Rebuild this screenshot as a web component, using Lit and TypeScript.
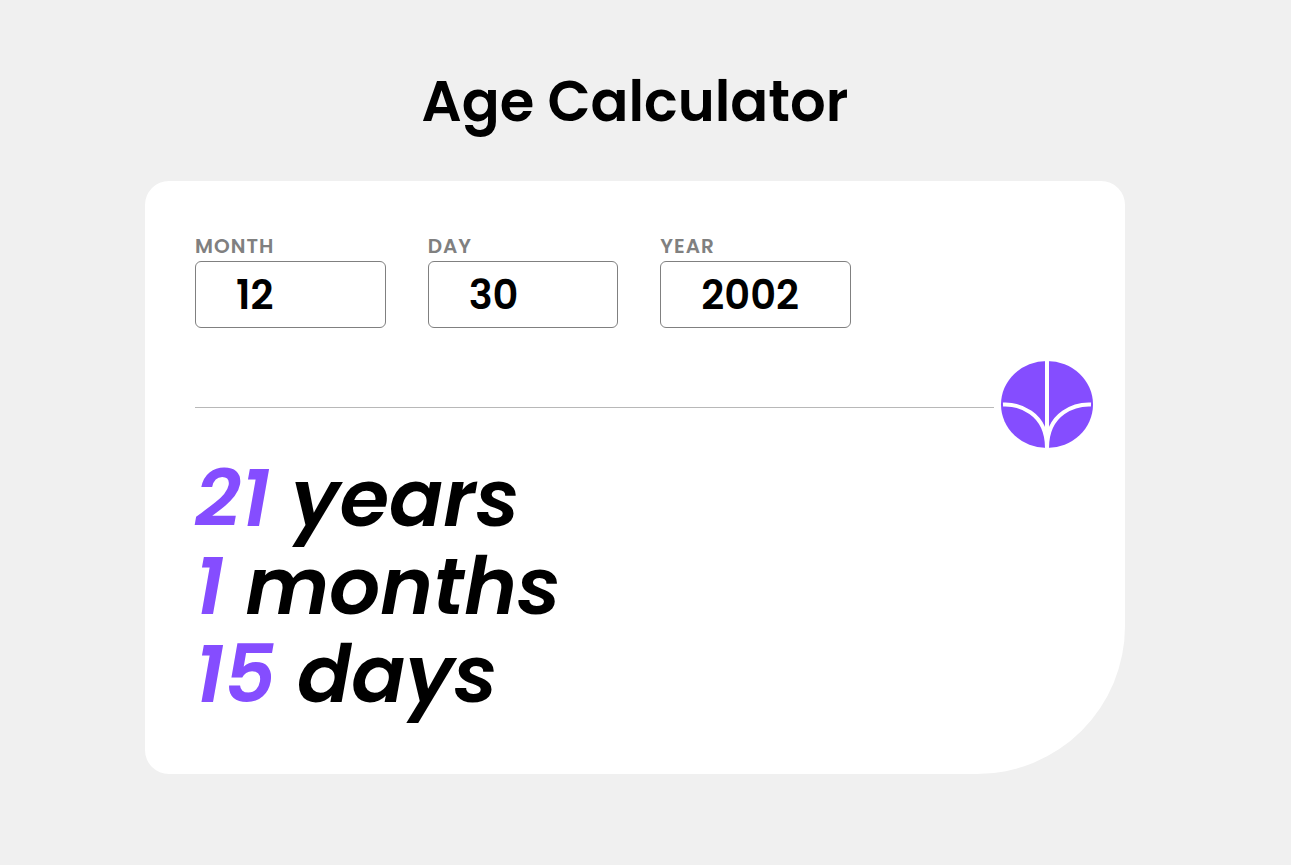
import { LitElement, html, css } from "lit";
import { customElement, state } from "lit/decorators.js";

interface Field {
  id: string;
  label: string;
  value: string;
}

interface Result {
  amount: number;
  unit: string;
}

@customElement("app-root")
export class AppRoot extends LitElement {
  static styles = css`
    :host {
      display: block;
      box-sizing: border-box;
      min-height: 100vh;
      padding: 60px 21px 60px 0;
      background: #f0f0f0;
      color: #000;
      font-family: Poppins, Inter, "Open Sans", sans-serif;
      font-weight: 600;
    }
    .title {
      margin: 0 0 37px;
      font-size: 56px;
      line-height: 84px;
      font-weight: 600;
      text-align: center;
    }
    .card {
      box-sizing: border-box;
      max-width: 980px;
      margin: 0 auto;
      padding: 53px 32px 56px 50px;
      background: #fff;
      border-radius: 24px 24px 148px 24px;
    }
    .fields {
      display: grid;
      grid-template-columns: repeat(3, 1fr);
      gap: 42px;
      max-width: 656px;
    }
    .field {
      display: flex;
      flex-direction: column;
      gap: 2px;
    }
    .label {
      font-size: 20px;
      line-height: 25px;
      letter-spacing: 1px;
      color: #808080;
    }
    .input {
      box-sizing: border-box;
      width: 100%;
      height: 67px;
      padding: 0 40px;
      border: 1px solid #808080;
      border-radius: 6px;
      background: #fff;
      color: #000;
      font: inherit;
      font-size: 40px;
      outline: none;
    }
    .divider {
      display: flex;
      align-items: center;
      gap: 7px;
      margin-top: 33px;
    }
    .line {
      flex: 1;
      height: 1px;
      margin: 6px 0 0;
      border: 0;
      background: #b8b8b8;
    }
    .submit {
      display: block;
      width: 92px;
      height: 87px;
      padding: 0;
      border: 0;
      border-radius: 50%;
      background: #854dff;
      cursor: pointer;
    }
    .arrow {
      display: block;
      width: 92px;
      height: 87px;
    }
    .results {
      margin-top: 6px;
      font-size: 80px;
      line-height: 88px;
      font-style: italic;
    }
    .result {
      margin: 0;
    }
    .amount {
      color: #854dff;
    }
  `;

  @state() private fields: Field[] = [
    { id: "month", label: "MONTH", value: "12" },
    { id: "day", label: "DAY", value: "30" },
    { id: "year", label: "YEAR", value: "2002" },
  ];

  @state() private results: Result[] = [
    { amount: 21, unit: "years" },
    { amount: 1, unit: "months" },
    { amount: 15, unit: "days" },
  ];

  render() {
    return html`
      <h1 class="title">Age Calculator</h1>
      <main class="card">
        <div class="fields">
          ${this.fields.map(
            (f) => html`
              <div class="field">
                <label class="label" for=${f.id}>${f.label}</label>
                <input class="input" id=${f.id} type="text" inputmode="numeric" .value=${f.value} />
              </div>
            `
          )}
        </div>
        <div class="divider">
          <hr class="line" />
          <button class="submit" type="button" aria-label="Calculate age">
            <svg class="arrow" viewBox="0 0 46 44" preserveAspectRatio="none" fill="none" stroke="#fff" stroke-width="2" aria-hidden="true">
              <path d="M1 22.019C8.333 21.686 23 25.616 23 44M23 44V0M45 22.019C37.667 21.686 23 25.616 23 44" />
            </svg>
          </button>
        </div>
        <div class="results">
          ${this.results.map(
            (r) => html`<p class="result"><span class="amount">${r.amount}</span> ${r.unit}</p>`
          )}
        </div>
      </main>
    `;
  }
}
